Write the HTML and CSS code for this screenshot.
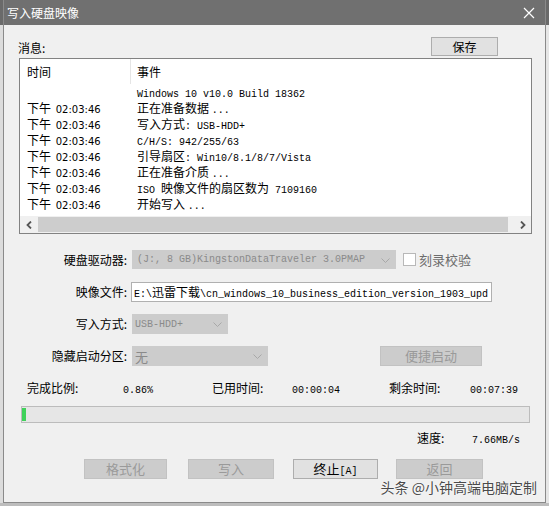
FILE: index.html
```html
<!DOCTYPE html>
<html lang="zh-CN">
<head>
<meta charset="utf-8">
<title>写入硬盘映像</title>
<link rel="stylesheet" href="styles.css">
</head>
<body>
<div class="screen">
  <div class="behind"></div>
  <div class="win">
    <div class="titlebar">
      <span class="title">写入硬盘映像</span>
      <svg class="close" width="12" height="12" viewBox="0 0 12 12"><path d="M1 1L11 11M11 1L1 11" stroke="#ffffff" stroke-width="1.2" fill="none"/></svg>
    </div>
    <div class="body">
      <div class="msgrow">
        <span class="lbl">消息:</span>
        <div class="btn">保存</div>
      </div>
      <div class="list">
        <div class="lhead"><div class="c1">时间</div><div class="c2">事件</div></div>
        <div class="lrows">
          <div class="lrow"><div class="c1"></div><div class="c2"><span class="m">Windows 10 v10.0 Build 18362</span></div></div>
          <div class="lrow"><div class="c1">下午 <span class="t">02:03:46</span></div><div class="c2">正在准备数据 <span class="m">...</span></div></div>
          <div class="lrow"><div class="c1">下午 <span class="t">02:03:46</span></div><div class="c2">写入方式<span class="m">: USB-HDD+</span></div></div>
          <div class="lrow"><div class="c1">下午 <span class="t">02:03:46</span></div><div class="c2"><span class="m">C/H/S: 942/255/63</span></div></div>
          <div class="lrow"><div class="c1">下午 <span class="t">02:03:46</span></div><div class="c2">引导扇区<span class="m">: Win10/8.1/8/7/Vista</span></div></div>
          <div class="lrow"><div class="c1">下午 <span class="t">02:03:46</span></div><div class="c2">正在准备介质 <span class="m">...</span></div></div>
          <div class="lrow"><div class="c1">下午 <span class="t">02:03:46</span></div><div class="c2"><span class="m">ISO </span>映像文件的扇区数为<span class="m"> 7109160</span></div></div>
          <div class="lrow"><div class="c1">下午 <span class="t">02:03:46</span></div><div class="c2">开始写入 <span class="m">...</span></div></div>
        </div>
        <div class="hscroll">
          <div class="arr"><svg width="6" height="8" viewBox="0 0 6 8"><path d="M5 0.5L1.5 4L5 7.5" stroke="#555" stroke-width="1.8" fill="none"/></svg></div>
          <div class="thumb"></div>
          <div class="arr"><svg width="6" height="8" viewBox="0 0 6 8"><path d="M1 0.5L4.5 4L1 7.5" stroke="#555" stroke-width="1.8" fill="none"/></svg></div>
        </div>
      </div>

      <div class="frow r1">
        <div class="flbl">硬盘驱动器:</div>
        <div class="sel w264"><span class="m">(J:, 8 GB)KingstonDataTraveler 3.0PMAP</span><svg class="chev" width="9" height="5" viewBox="0 0 9 5"><path d="M0.5 0.5L4.5 4.5L8.5 0.5" stroke="#a8a8a8" stroke-width="1" fill="none"/></svg></div>
        <div class="chk"></div>
        <span class="chklbl">刻录校验</span>
      </div>
      <div class="frow r2">
        <div class="flbl">映像文件:</div>
        <div class="inp"><span class="m">E:\</span>迅雷下载<span class="m">\cn_windows_10_business_edition_version_1903_upd</span></div>
      </div>
      <div class="frow r3">
        <div class="flbl">写入方式:</div>
        <div class="sel w96"><span class="m">USB-HDD+</span><svg class="chev" width="9" height="5" viewBox="0 0 9 5"><path d="M0.5 0.5L4.5 4.5L8.5 0.5" stroke="#a8a8a8" stroke-width="1" fill="none"/></svg></div>
      </div>
      <div class="frow r4">
        <div class="flbl">隐藏启动分区:</div>
        <div class="sel w136"><span class="cj">无</span><svg class="chev" width="9" height="5" viewBox="0 0 9 5"><path d="M0.5 0.5L4.5 4.5L8.5 0.5" stroke="#a8a8a8" stroke-width="1" fill="none"/></svg></div>
        <div class="btn dis quick">便捷启动</div>
      </div>

      <div class="stats">
        <div class="s1">完成比例:</div>
        <div class="s2"><span class="m">0.86%</span></div>
        <div class="s3">已用时间:</div>
        <div class="s4"><span class="m">00:00:04</span></div>
        <div class="s5">剩余时间:</div>
        <div class="s6"><span class="m">00:07:39</span></div>
      </div>
      <div class="progress"><div class="fill" style="width:4px"></div></div>
      <div class="speed">
        <div class="sp1">速度:</div>
        <div class="sp2"><span class="m">7.66MB/s</span></div>
      </div>
      <div class="btnrow">
        <div class="btn dis b1">格式化</div>
        <div class="btn dis b2">写入</div>
        <div class="btn b3">终止<span class="m">[A]</span></div>
        <div class="btn dis b4">返回</div>
      </div>
    </div>
    <div class="watermark">头条 @小钟高端电脑定制</div>
  </div>
  <div class="behind-r"></div>
</div>
</body>
</html>
```

FILE: styles.css
```css
html, body {
  margin: 0;
  padding: 0;
  width: 549px;
  height: 506px;
  overflow: hidden;
  background: #bdbdbd;
  font-family: "Noto Sans CJK SC", "Liberation Sans", sans-serif;
  font-size: 12px;
  color: #000;
}

.screen {
  display: flex;
  height: 503px;
}

.behind {
  width: 3px;
  background: linear-gradient(to bottom, #6a6a6a 0, #6a6a6a 25px, #dcdcdc 25px);
}

.behind-r {
  width: 3px;
  background: linear-gradient(to bottom, #6a6a6a 0, #6a6a6a 25px, #e6e6e6 25px);
}

.win {
  position: relative;
  width: 543px;
  height: 503px;
  box-sizing: border-box;
  border: 1px solid #8a8a8a;
  border-top: none;
  background: #f0f0f0;
  display: flex;
  flex-direction: column;
}

.titlebar {
  height: 25px;
  background: #707070;
  display: flex;
  align-items: center;
  justify-content: space-between;
  padding: 0 10px 0 3px;
  flex: none;
}

.title {
  color: #ffffff;
  font-size: 12px;
  line-height: 25px;
}

.close {
  display: block;
}

.body {
  padding-left: 14px;
  display: flex;
  flex-direction: column;
}

.m {
  font-family: "Liberation Mono", monospace;
  font-size: 10px;
}

.t {
  font-family: "DejaVu Sans", sans-serif;
  font-size: 10px;
  margin-left: 2px;
}

.msgrow {
  margin-top: 12px;
  width: 480px;
  height: 19px;
  display: flex;
  justify-content: space-between;
  align-items: center;
}

.lbl {
  padding-top: 3px;
  line-height: 16px;
}

.btn {
  box-sizing: border-box;
  height: 19px;
  background: #e1e1e1;
  border: 1px solid #adadad;
  text-align: center;
  line-height: 17px;
  font-size: 12px;
}

.msgrow .btn {
  width: 67px;
}

.btn.dis {
  background: #cccccc;
  border-color: #c2c2c2;
  color: #9a9a9a;
}

.list {
  margin-top: 2px;
  margin-left: 1px;
  width: 513px;
  height: 176px;
  box-sizing: border-box;
  border: 1px solid #828282;
  background: #ffffff;
  display: flex;
  flex-direction: column;
}

.lhead {
  height: 25px;
  display: flex;
  align-items: center;
  flex: none;
}

.c1 {
  width: 111px;
  box-sizing: border-box;
  padding-left: 7px;
  white-space: nowrap;
}

.c2 {
  padding-left: 6px;
  white-space: nowrap;
}

.lhead .c1 {
  height: 25px;
  line-height: 25px;
  border-right: 1px solid #e5e5e5;
}

.lhead .c2 {
  line-height: 25px;
}

.lrows {
  height: 128px;
  flex: none;
}

.lrow {
  height: 16px;
  line-height: 16px;
  display: flex;
}

.hscroll {
  margin-top: auto;
  height: 17px;
  background: #f0f0f0;
  display: flex;
  align-items: center;
  flex: none;
}

.arr {
  width: 17px;
  height: 17px;
  display: flex;
  align-items: center;
  justify-content: center;
}

.arr svg {
  display: block;
}

.thumb {
  margin-left: 1px;
  width: 470px;
  height: 15px;
  background: #cdcdcd;
  margin-right: 6px;
}

.frow {
  display: flex;
  align-items: center;
}

.flbl {
  width: 109px;
  text-align: right;
  white-space: nowrap;
  line-height: 16px;
}

.r1 {
  margin-top: 16px;
  height: 19px;
}

.r2 {
  margin-top: 13px;
  height: 20px;
}

.r3 {
  margin-top: 12px;
  height: 20px;
}

.r4 {
  margin-top: 12px;
  height: 20px;
}

.sel {
  margin-left: 5px;
  box-sizing: border-box;
  height: 100%;
  background: #cccccc;
  color: #8a8a8a;
  display: flex;
  align-items: center;
  padding-left: 3px;
  position: relative;
  white-space: nowrap;
  overflow: hidden;
}

.r1 .sel {
  padding-left: 5px;
}

.sel .chev {
  position: absolute;
  right: 6px;
  top: 8px;
}

.w264 { width: 264px; }
.w96 { width: 96px; }
.w136 { width: 136px; }

.cj {
  font-size: 13px;
  color: #8a8a8a;
}

.chk {
  margin-left: 7px;
  width: 13px;
  height: 13px;
  box-sizing: border-box;
  background: #ffffff;
  border: 1px solid #b8b8b8;
}

.chklbl {
  margin-left: 3px;
  color: #6d6d6d;
  font-size: 13px;
}

.inp {
  margin-left: 4px;
  width: 361px;
  height: 20px;
  box-sizing: border-box;
  border: 1px solid #b0b0b0;
  background: #ffffff;
  padding-left: 2px;
  line-height: 18px;
  white-space: nowrap;
  overflow: hidden;
}

.quick {
  margin-left: 112px;
  width: 102px;
  height: 20px;
  line-height: 18px;
  font-size: 13px;
}

.stats {
  margin-top: 14px;
  margin-left: 9px;
  height: 16px;
  line-height: 16px;
  display: flex;
  white-space: nowrap;
}

.s1 { width: 96px; }
.s2 { width: 89px; }
.s3 { width: 80px; }
.s4 { width: 97px; }
.s5 { width: 81px; }

.progress {
  margin-top: 10px;
  margin-left: 3px;
  width: 509px;
  height: 17px;
  box-sizing: border-box;
  border: 1px solid #bcbcbc;
  background: #e6e6e6;
  padding: 1px 0;
}

.fill {
  height: 100%;
  background: #3fd25a;
}

.speed {
  margin-top: 7px;
  margin-left: 399px;
  height: 16px;
  line-height: 16px;
  display: flex;
}

.sp1 {
  width: 55px;
}

.btnrow {
  margin-top: 13px;
  margin-left: 66px;
  display: flex;
}

.btnrow .btn {
  height: 20px;
  line-height: 18px;
  font-size: 13px;
}

.b1 { width: 83px; }
.b2 { width: 86px; margin-left: 21px; }
.b3 { width: 85px; margin-left: 19px; }
.b4 { width: 87px; margin-left: 18px; }

.watermark {
  position: absolute;
  right: 8px;
  bottom: 6px;
  font-size: 14px;
  line-height: 18px;
  color: #4a4a4a;
  white-space: nowrap;
  text-shadow: 0 0 2px #ffffff, 0 0 1px #ffffff;
}
```
